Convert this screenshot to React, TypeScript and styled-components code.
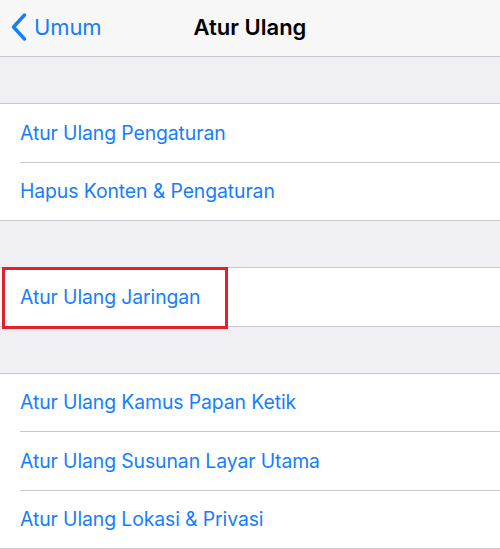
import React from "react";
import styled, { createGlobalStyle } from "styled-components";

const Global = createGlobalStyle`
  html, body {
    margin: 0;
    padding: 0;
    background: #efeff4;
    font-family: Inter, "Open Sans", "Liberation Sans", sans-serif;
  }
`;

const groups: string[][] = [
  ["Atur Ulang Pengaturan", "Hapus Konten & Pengaturan"],
  ["Atur Ulang Jaringan"],
  [
    "Atur Ulang Kamus Papan Ketik",
    "Atur Ulang Susunan Layar Utama",
    "Atur Ulang Lokasi & Privasi",
  ],
];

export default function App() {
  return (
    <Screen>
      <Global />
      <NavBar>
        <BackButton>
          <svg width="18" height="28" viewBox="0 0 18 28">
            <path
              d="M14.5 2 L3.5 14 L14.5 26"
              fill="none"
              stroke="#157efb"
              strokeWidth="3.4"
              strokeLinecap="round"
              strokeLinejoin="round"
            />
          </svg>
          <span>Umum</span>
        </BackButton>
        <Title>Atur Ulang</Title>
      </NavBar>
      {groups.map((rows, gi) => (
        <React.Fragment key={gi}>
          <Spacer />
          <Group>
            {rows.map((label, ri) => (
              <Row key={label} $last={ri === rows.length - 1}>
                <RowLabel>{label}</RowLabel>
                {label === "Atur Ulang Jaringan" && <Highlight />}
              </Row>
            ))}
          </Group>
        </React.Fragment>
      ))}
    </Screen>
  );
}

const Screen = styled.div`
  width: 500px;
  height: 549px;
  overflow: hidden;
  background: #efeff4;
`;

const NavBar = styled.div`
  position: relative;
  height: 56px;
  background: #f7f7f8;
  border-bottom: 1px solid #c9c8cd;
  display: flex;
  align-items: center;
  justify-content: center;
`;

const BackButton = styled.div`
  position: absolute;
  left: 10px;
  top: 0;
  bottom: 0;
  display: flex;
  align-items: center;
  gap: 6px;
  color: #157efb;
  font-size: 22px;
  letter-spacing: -0.1px;
  padding-bottom: 2px;
`;

const Title = styled.div`
  font-size: 22px;
  font-weight: 600;
  color: #000;
  letter-spacing: 0px;
  padding-bottom: 2px;
`;

const Spacer = styled.div`
  height: 46px;
`;

const Group = styled.div`
  background: #fff;
  border-top: 1px solid #c9c8cd;
  border-bottom: 1px solid #c9c8cd;
`;

const Row = styled.div<{ $last: boolean }>`
  position: relative;
  height: 57.5px;
  display: flex;
  align-items: center;
  padding-left: 20px;
  &::after {
    content: "";
    display: ${(p) => (p.$last ? "none" : "block")};
    position: absolute;
    left: 20px;
    right: 0;
    bottom: -1px;
    height: 1px;
    background: #c9c8cd;
  }
  & + & {
    margin-top: 1px;
  }
`;

const RowLabel = styled.span`
  color: #157efb;
  font-size: 19.4px;
  letter-spacing: -0.1px;
`;

const Highlight = styled.div`
  position: absolute;
  box-sizing: border-box;
  left: 2px;
  top: -1px;
  width: 226px;
  height: 62px;
  border: 3px solid #e5202c;
`;
